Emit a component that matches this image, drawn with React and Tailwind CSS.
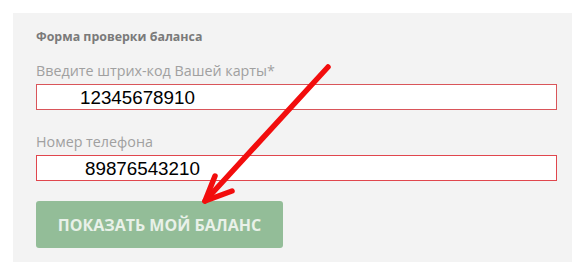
import React from "react";

const App = () => {
  return (
    <div className="relative w-[585px] h-[275px] bg-white overflow-hidden">
      <div className="ml-[13px] mt-[13px] w-[559px] h-[249px] bg-[#f3f3f3] pl-[23px] pr-[15px] pt-[16px] font-['Open_Sans',sans-serif]">
        <div className="text-[12.4px] font-bold text-[#7a7a7a] leading-[16px]">Форма проверки баланса</div>

        <div className="mt-[16px] text-[14.3px] text-[#a0a0a0] leading-[20px]">Введите штрих-код Вашей карты*</div>
        <div className="mt-[3px] h-[26px] bg-white border border-[#d9555a] flex items-center pl-[43px]">
          <span className="font-['Liberation_Sans',Arial,sans-serif] text-[18.8px] text-black leading-none pt-[2px]">12345678910</span>
        </div>

        <div className="mt-[22px] text-[14.3px] text-[#a0a0a0] leading-[20px]">Номер телефона</div>
        <div className="mt-[3px] h-[26px] bg-white border border-[#e0464d] flex items-center pl-[48px]">
          <span className="font-['Liberation_Sans',Arial,sans-serif] text-[18.8px] text-black leading-none pt-[2px]">89876543210</span>
        </div>

        <button className="mt-[20px] w-[247px] h-[47px] rounded-[3px] bg-[#93bd98] text-[#e9f1e9] text-[16px] font-bold flex items-center justify-center">
          ПОКАЗАТЬ МОЙ БАЛАНС
        </button>
      </div>

      {/* red arrow drawn over the form */}
      <svg className="absolute left-0 top-0 pointer-events-none" width="585" height="275" viewBox="0 0 585 275">
        <g stroke="#f20d0d" strokeWidth="5.5" strokeLinecap="round" strokeLinejoin="round" fill="none">
          <path d="M328 67 L205 201" />
          <path d="M215 176 L205 201 L232 191" />
        </g>
      </svg>
    </div>
  );
};

export default App;
